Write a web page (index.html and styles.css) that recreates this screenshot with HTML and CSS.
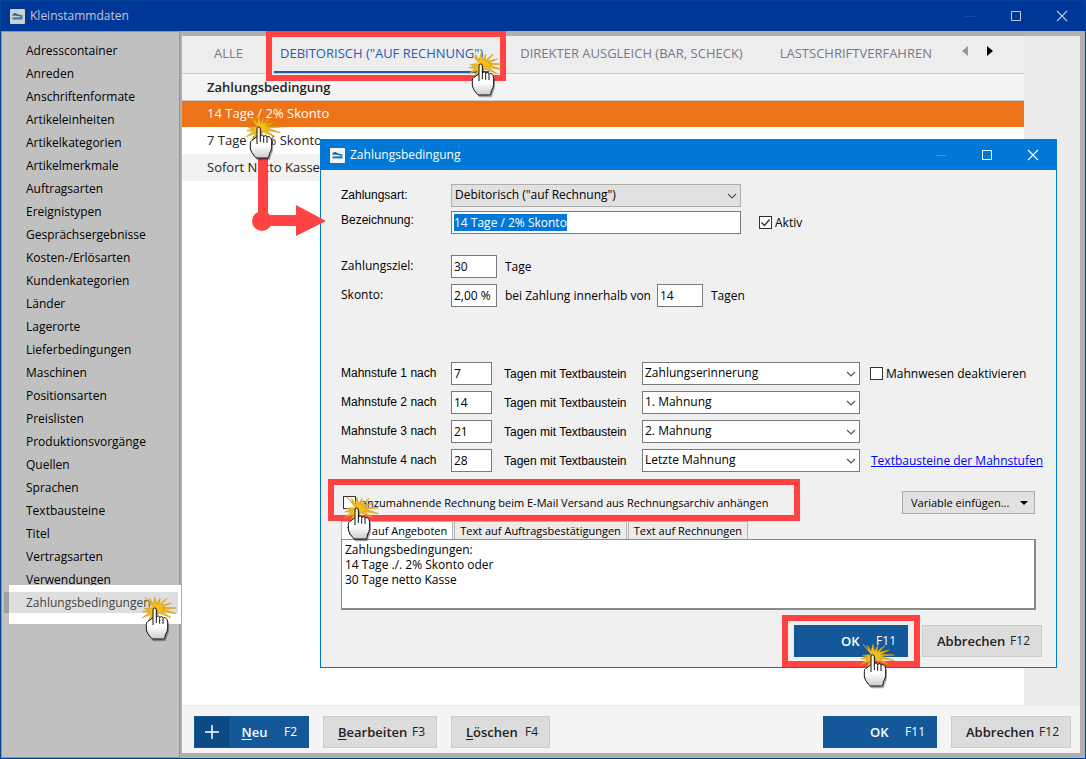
FILE: index.html
```
<!DOCTYPE html>
<html lang="de">
<head>
<meta charset="utf-8">
<title>Kleinstammdaten</title>
<link rel="stylesheet" href="styles.css">
</head>
<body>
<svg class="defs" aria-hidden="true">
  <symbol id="logo" viewBox="0 0 15 15">
    <rect x="0" y="0" width="15" height="15" rx="1" fill="currentColor"/>
    <path d="M2 6 L4 4 L6 4 L7 5 L12.500 6.500 L12.500 8 L8 7 L2 6.600 Z" fill="#2b6ba3"/>
    <path d="M2 8.500 L12.500 8 L12.500 10.500 L3 10.500 Z" fill="#2f7ab8"/>
  </symbol>
  <symbol id="min" viewBox="0 0 12 12"><path d="M1 6.5H11" stroke="currentColor" fill="none"/></symbol>
  <symbol id="max" viewBox="0 0 12 12"><path d="M1.5 1.5H10.500V10.500H1.500Z" stroke="currentColor" fill="none"/></symbol>
  <symbol id="close" viewBox="0 0 12 12"><path d="M1 1L11 11M11 1L1 11" stroke="currentColor" stroke-width="1.1" fill="none"/></symbol>
  <symbol id="hand" viewBox="0 0 132 168">
    <path d="M47 55 L18 18 L34 36 L32 22 L42 40 L48 19 L53 40 L63 22 L60 41 L84 22 L66 43 L97 36 L70 49 L112 51 L72 54 L112 68 L68 61 L96 80 L60 66 L28 90 L38 70 L10 80 L32 64 L12 62 L32 57 L16 53 L35 50 Z" fill="#f2bd1d" stroke="#d09a0c" stroke-width="2"/>
    <path d="M42 57 Q42 51 47 51 Q52 51 52 57 V80 Q54 74 59 75 Q62 76 62 81 Q65 75 69 77 Q72 78 72 83 Q75 78 79 80 Q86 84 86 94 V112 Q85 124 79 131 L78 141 Q75 144 70 144 H43 Q38 144 35 139 Q25 129 22 117 V100 Q22 94 27 91 L35 84 L36 103 L42 100 Z" fill="#222" opacity=".4" transform="translate(4 7)"/>
    <path d="M42 57 Q42 51 47 51 Q52 51 52 57 V80 Q54 74 59 75 Q62 76 62 81 Q65 75 69 77 Q72 78 72 83 Q75 78 79 80 Q86 84 86 94 V112 Q85 124 79 131 L78 141 Q75 144 70 144 H43 Q38 144 35 139 Q25 129 22 117 V100 Q22 94 27 91 L42 80 Z" fill="url(#palm)" stroke="#111" stroke-width="3"/>
    <path d="M42 80V102M52 80V96M62 82V98M72 84V99" fill="none" stroke="#111" stroke-width="3"/>
  </symbol>
  <linearGradient id="palm" x1="0" y1="0" x2="0" y2="1">
    <stop offset=".6" stop-color="#fff"/><stop offset="1" stop-color="#ccc"/>
  </linearGradient>
</svg>

<div class="window">
  <header class="titlebar">
    <svg class="logo"><use href="#logo"/></svg>
    <h1 class="title">Kleinstammdaten</h1>
    <button class="win-btn win-min" aria-label="Minimieren"><svg><use href="#min"/></svg></button>
    <button class="win-btn" aria-label="Maximieren"><svg><use href="#max"/></svg></button>
    <button class="win-btn" aria-label="Schließen"><svg><use href="#close"/></svg></button>
  </header>
  <div class="body">
    <nav class="sidebar">
      <a href="#">Adresscontainer</a>
      <a href="#">Anreden</a>
      <a href="#">Anschriftenformate</a>
      <a href="#">Artikeleinheiten</a>
      <a href="#">Artikelkategorien</a>
      <a href="#">Artikelmerkmale</a>
      <a href="#">Auftragsarten</a>
      <a href="#">Ereignistypen</a>
      <a href="#">Gesprächsergebnisse</a>
      <a href="#">Kosten-/Erlösarten</a>
      <a href="#">Kundenkategorien</a>
      <a href="#">Länder</a>
      <a href="#">Lagerorte</a>
      <a href="#">Lieferbedingungen</a>
      <a href="#">Maschinen</a>
      <a href="#">Positionsarten</a>
      <a href="#">Preislisten</a>
      <a href="#">Produktionsvorgänge</a>
      <a href="#">Quellen</a>
      <a href="#">Sprachen</a>
      <a href="#">Textbausteine</a>
      <a href="#">Titel</a>
      <a href="#">Vertragsarten</a>
      <a href="#">Verwendungen</a>
      <a href="#" class="current"><span>Zahlungsbedingungen</span></a>
    </nav>
    <main class="main">
      <div class="list-area">
        <div class="tabs">
          <button class="tab">ALLE</button>
          <button class="tab active">DEBITORISCH ("AUF RECHNUNG")</button>
          <button class="tab">DIREKTER AUSGLEICH (BAR, SCHECK)</button>
          <button class="tab">LASTSCHRIFTVERFAHREN</button>
          <button class="scroll off" aria-label="Zurück"><svg viewBox="0 0 6 10"><path d="M6 0V10L0 5Z" fill="#999"/></svg></button>
          <button class="scroll" aria-label="Weiter"><svg viewBox="0 0 6 10"><path d="M0 0V10L6 5Z" fill="#000"/></svg></button>
        </div>
        <table class="list">
          <thead><tr><th>Zahlungsbedingung</th></tr></thead>
          <tbody>
            <tr class="selected"><td>14 Tage / 2% Skonto</td></tr>
            <tr><td>7 Tage / 2% Skonto</td></tr>
            <tr class="alt"><td>Sofort Netto Kasse</td></tr>
          </tbody>
        </table>
      </div>
      <footer class="footer">
        <button class="btn primary new"><span class="plus"><svg viewBox="0 0 14 14"><path d="M7 0V14M0 7H14" stroke="#fff" stroke-width="1.500"/></svg></span><b><u>N</u>eu</b><kbd>F2</kbd></button>
        <button class="btn"><b><u>B</u>earbeiten</b><kbd>F3</kbd></button>
        <button class="btn delete"><b><u>L</u>öschen</b><kbd>F4</kbd></button>
        <button class="btn primary ok"><b>OK</b><kbd>F11</kbd></button>
        <button class="btn cancel"><b>Abbrechen</b><kbd>F12</kbd></button>
      </footer>
    </main>
  </div>
</div>

<section class="dialog" role="dialog" aria-labelledby="dlg-title">
  <header class="titlebar dlg-bar">
    <svg class="logo"><use href="#logo"/></svg>
    <h2 class="title" id="dlg-title">Zahlungsbedingung</h2>
    <button class="win-btn win-min" aria-label="Minimieren"><svg><use href="#min"/></svg></button>
    <button class="win-btn" aria-label="Maximieren"><svg><use href="#max"/></svg></button>
    <button class="win-btn" aria-label="Schließen"><svg><use href="#close"/></svg></button>
  </header>
  <form class="form">
    <div class="row">
      <label class="lead arial" for="art">Zahlungsart:</label>
      <select class="field wide gray" id="art"><option>Debitorisch ("auf Rechnung")</option></select>
    </div>
    <div class="row">
      <label class="lead arial raise" for="bez">Bezeichnung:</label>
      <input class="field wide" id="bez" type="text" value="14 Tage / 2% Skonto">
      <label class="check"><input type="checkbox" checked>Aktiv</label>
    </div>
    <div class="row term">
      <label class="lead" for="ziel">Zahlungsziel:</label>
      <input class="field num" id="ziel" type="text" value="30">
      <span class="unit">Tage</span>
    </div>
    <div class="row discount">
      <label class="lead" for="skonto">Skonto:</label>
      <input class="field num" id="skonto" type="text" value="2,00 %">
      <label class="unit within" for="frist">bei Zahlung innerhalb von</label>
      <input class="field num" id="frist" type="text" value="14">
      <span class="unit">Tagen</span>
    </div>

    <div class="levels">
      <div class="row level">
        <label class="lead arial" for="m1">Mahnstufe 1 nach</label>
        <input class="field days" id="m1" type="text" value="7">
        <label class="mid arial" for="t1">Tagen mit Textbaustein</label>
        <select class="field block" id="t1"><option>Zahlungserinnerung</option></select>
        <label class="check"><input type="checkbox">Mahnwesen deaktivieren</label>
      </div>
      <div class="row level">
        <label class="lead arial" for="m2">Mahnstufe 2 nach</label>
        <input class="field days" id="m2" type="text" value="14">
        <label class="mid arial" for="t2">Tagen mit Textbaustein</label>
        <select class="field block" id="t2"><option>1. Mahnung</option></select>
      </div>
      <div class="row level">
        <label class="lead arial" for="m3">Mahnstufe 3 nach</label>
        <input class="field days" id="m3" type="text" value="21">
        <label class="mid arial" for="t3">Tagen mit Textbaustein</label>
        <select class="field block" id="t3"><option>2. Mahnung</option></select>
      </div>
      <div class="row level">
        <label class="lead arial" for="m4">Mahnstufe 4 nach</label>
        <input class="field days" id="m4" type="text" value="28">
        <label class="mid arial" for="t4">Tagen mit Textbaustein</label>
        <select class="field block" id="t4"><option>Letzte Mahnung</option></select>
        <a class="link" href="#">Textbausteine der Mahnstufen</a>
      </div>
    </div>

    <div class="row attach">
      <label class="check small"><input type="checkbox">anzumahnende Rechnung beim E-Mail Versand aus Rechnungsarchiv anhängen</label>
      <button type="button" class="variable small">Variable einfügen... <svg viewBox="0 0 8 4"><path d="M0 0H8L4 4Z"/></svg></button>
    </div>

    <div class="text-tabs small">
      <button type="button" class="on">Text auf Angeboten</button>
      <button type="button">Text auf Auftragsbestätigungen</button>
      <button type="button">Text auf Rechnungen</button>
    </div>
    <textarea class="text" aria-label="Text auf Angeboten">Zahlungsbedingungen:
14 Tage ./. 2% Skonto oder
30 Tage netto Kasse</textarea>

    <div class="actions">
      <button type="button" class="btn primary ok"><b>OK</b><kbd>F11</kbd></button>
      <button type="button" class="btn cancel"><b>Abbrechen</b><kbd>F12</kbd></button>
    </div>
  </form>
</section>

<div class="frame frame-tab"></div>
<div class="frame frame-attach"></div>
<div class="frame frame-ok"></div>
<svg class="arrow" viewBox="0 0 75 84" aria-hidden="true"><path d="M6 0H16V59H44V49L74 65L44 80V70H11L6 60Z" fill="#ff4343"/><circle cx="10" cy="65" r="10" fill="#ff4343"/></svg>
<svg class="hand hand-tab" aria-hidden="true"><use href="#hand"/></svg>
<svg class="hand hand-row" aria-hidden="true"><use href="#hand"/></svg>
<svg class="hand hand-attach" aria-hidden="true"><use href="#hand"/></svg>
<svg class="hand hand-ok" aria-hidden="true"><use href="#hand"/></svg>
<svg class="hand hand-nav" aria-hidden="true"><use href="#hand"/></svg>
<script src="app.js"></script>
</body>
</html>
```
FILE: app.js
```
const nameField = document.getElementById("bez");
nameField.focus();
nameField.select();
```
FILE: styles.css
```
* { box-sizing: border-box; }
body {
  margin: 0;
  position: relative;
  font-family: "Open Sans", "Noto Sans", sans-serif;
  font-size: 12px;
  line-height: 16px;
  color: #000;
}
button, input, select, textarea { font: inherit; color: inherit; margin: 0; }
button { border: 0; padding: 0; background: none; }
.defs { position: absolute; width: 0; height: 0; }
.small { font-size: 11px; }

.window {
  display: flex;
  flex-direction: column;
  height: 100vh;
  border: 1px solid #00459a;
  background: #afafaf;
}
.titlebar {
  display: flex;
  align-items: center;
  flex: none;
  height: 30px;
  padding: 0 0 0 9px;
  background: #003899;
  color: #c4c8d4;
}
.logo { width: 15px; height: 15px; margin-right: 5px; color: #d0d0d0; }
.title { flex: 1; margin: 0; font-size: 12px; font-weight: 400; }
.win-btn { display: grid; place-items: center; width: 46px; height: 30px; }
.win-btn svg { width: 12px; height: 12px; }
.win-min { color: #0a57a8; }

.body { display: flex; flex: 1; min-height: 0; }
.sidebar {
  flex: none;
  width: 179px;
  padding: 8px 1px 0 2px;
  background: #c0c0c0;
  border: 1px solid #9090a8;
}
.sidebar a {
  display: block;
  height: 21px;
  margin: 0 0 2px;
  padding-left: 22px;
  line-height: 21px;
  color: #000;
  text-decoration: none;
}
.sidebar .current { position: relative; background: #9f9f9f; color: #444; }
.sidebar .current::before {
  content: "";
  position: absolute;
  inset: -7px -3px -11px 5px;
  background: #fff;
}
.sidebar .current span {
  position: relative;
  display: block;
  margin-left: -17px;
  padding-left: 17px;
  background: #dedede;
}

.main { flex: 1; display: flex; flex-direction: column; min-width: 0; padding: 5px 5px 5px 2px; }
.list-area { flex: 1; padding-right: 56px; background: linear-gradient(#fff, #fff) no-repeat 0 0 / calc(100% - 56px) 100%, #ebebeb; }
.tabs {
  display: flex;
  align-items: stretch;
  height: 38px;
  padding-left: 14px;
  background: #ededed;
  border-bottom: 1px solid #ccc;
}
.tab { flex: none; margin: 0 25px 0 0; padding: 0 6px 3px; color: #78788c; font-size: 13px; font-weight: 500; white-space: nowrap; }
.tab:first-child { padding: 0 18px 3px; margin: 0 13px 0 0; }
.tab.active { color: #1e60b5; border-bottom: 2px solid #1a5fb0; padding-bottom: 1px; }
.scroll { width: 25px; padding-bottom: 5px; }
.off { margin-left: -10px; }
.scroll svg { width: 6px; height: 10px; }
.list { width: 100%; border-collapse: collapse; font-size: 13px; color: #222; }
.list th { height: 26px; padding: 0 0 0 25px; background: #f3f3f3; border-bottom: 1px solid #ccc; text-align: left; font-weight: 600; }
.list td { height: 27px; padding: 0 0 1px 25px; }
.list .selected { background: #ec7318; color: #fff; }
.list .alt { background: #f2f2f0; }

.footer { display: flex; flex: none; gap: 14px; padding: 10px 9px 5px 12px; background: #f4f4f4; border-top: 1px solid #e8e8e8; }
.btn {
  display: flex;
  align-items: center;
  justify-content: space-between;
  width: 114px;
  height: 32px;
  padding: 0 11px 0 14px;
  background: #dcdcdc;
  border: 1px solid #ccc;
  color: #222;
}
.btn b { font-size: 13px; font-weight: 600; }
.btn u { text-underline-offset: 2px; }
.btn kbd { font: inherit; }
.btn.primary { background: #14589a; border-color: #14589a; color: #fff; }
.btn.new { width: 115px; padding-left: 0; }
.new b { margin-right: 4px; }
.btn.delete { width: 99px; }
.btn.ok { padding-left: 46px; }
.btn.cancel { width: 120px; }
.footer .ok { margin-left: auto; }
.plus { display: grid; place-items: center; width: 34px; height: 30px; background: #0c4a86; }
.plus svg { width: 14px; height: 14px; }

.dialog { position: absolute; left: 320px; top: 139px; width: 737px; background: #f0f0f0; border: 1px solid #0078d7; }
.dlg-bar { background: #0078d7; color: #fff; }
.dlg-bar .logo { color: #f4f4f4; }
.dlg-bar .win-min { color: #3f95e0; }
.form { padding: 14px 14px 10px 20px; }
.row { display: flex; align-items: center; height: 23px; margin-bottom: 4px; }
.lead { flex: none; width: 110px; padding-bottom: 2px; }
.arial { font-family: "Liberation Sans", Arial, sans-serif; }
.raise { padding-bottom: 6px; }
.field {
  flex: none;
  height: 23px;
  padding: 0 2px 1px;
  border: 1px solid #7a7a7a;
  border-radius: 0;
  background-color: #fff;
  outline: 0;
}
.field::selection { background: #0078d7; color: #fff; }
select.field {
  appearance: none;
  background: #fff url("data:image/svg+xml,%3Csvg xmlns='http://www.w3.org/2000/svg' width='10' height='6'%3E%3Cpath d='M1 1L5 5L9 1' fill='none' stroke='%23555' stroke-width='1.2'/%3E%3C/svg%3E") no-repeat right 3px center;
}
select.gray { background-color: #e1e1e1; border-color: #adadad; padding-left: 3px; }
.wide { width: 290px; }
.num { width: 46px; }
.days { width: 41px; }
.block { width: 218px; }
.mid { flex: none; width: 150px; padding-left: 12px; }
.unit { padding-left: 8px; }
.within { width: 160px; }
.check { display: flex; align-items: center; gap: 3px; white-space: nowrap; }
.wide + .check { margin-left: 18px; }
.block + .check { margin-left: 10px; }
.check input { appearance: none; flex: none; width: 13px; height: 13px; border: 1px solid #333; background: #fff; }
.check input:checked {
  background: #fff url("data:image/svg+xml,%3Csvg xmlns='http://www.w3.org/2000/svg' width='11' height='11'%3E%3Cpath d='M1.5 5.5L4.500 8.500L9.500 2.500' fill='none' stroke='%23333' stroke-width='1.300'/%3E%3C/svg%3E") center;
}
.term { margin: 21px 0 6px; }
.discount { margin-bottom: 55px; }
.level { margin-bottom: 6px; }
.link { margin-left: 11px; color: #00f; white-space: nowrap; }
.attach { justify-content: space-between; margin: 19px 7px 7px 2px; }
.attach .check { gap: 5px; }
.variable { display: flex; flex: none; align-items: center; justify-content: space-between; width: 133px; height: 23px; padding: 0 6px 0 8px; background: #e1e1e1; border: 1px solid #adadad; white-space: nowrap; }
.variable svg { width: 8px; height: 4px; }
.text-tabs { display: flex; gap: 1px; }
.text-tabs button { height: 18px; padding: 0 5px; border: 1px solid #b4b4b4; border-bottom: 0; background: #ebebeb; white-space: nowrap; }
.text-tabs .on { background: #fff; }
.text { display: block; width: 695px; height: 71px; padding: 2px 3px; border: 2px solid #8a8a8a; border-width: 1px 2px 2px 1px; border-radius: 0; line-height: 15px; resize: none; outline: 0; }
.actions { display: flex; justify-content: flex-end; gap: 14px; margin-top: 15px; }

.frame { position: absolute; border: 6px solid #ff4343; }
.frame-tab { left: 266px; top: 31px; width: 240px; height: 50px; }
.frame-attach { left: 328px; top: 479px; width: 472px; height: 42px; }
.frame-ok { left: 782px; top: 615px; width: 138px; height: 52px; }
.arrow { position: absolute; left: 252px; top: 156px; width: 75px; height: 84px; }
.hand { position: absolute; width: 44px; height: 56px; }
.hand-tab { left: 465px; top: 47px; }
.hand-row { left: 243px; top: 110px; }
.hand-attach { left: 341px; top: 491px; }
.hand-ok { left: 857px; top: 638px; }
.hand-nav { left: 139px; top: 591px; }
```
